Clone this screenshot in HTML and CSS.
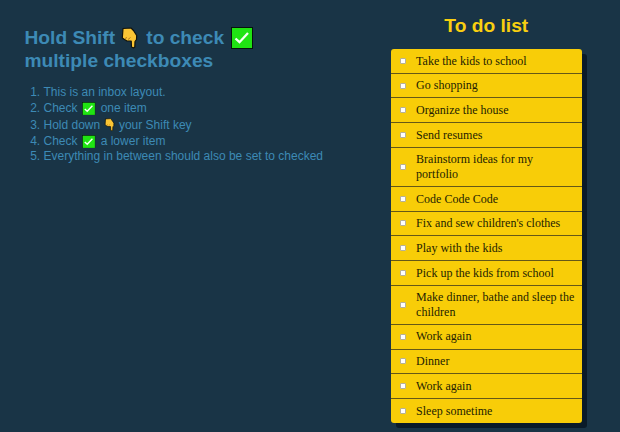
FILE: index.html
```html
<!DOCTYPE html>
<html lang="en">
<head>
<meta charset="utf-8">
<title>To do list</title>
<link rel="stylesheet" href="styles.css">
</head>
<body>
<svg class="symbols" aria-hidden="true">
  <symbol id="check" viewBox="0 0 22 22">
    <rect x=".5" y=".5" width="21" height="21" fill="#20e413" stroke="#07140c"/>
    <path d="M4.5 11.5L8.5 15.2L17 6" fill="none" stroke="#f4fff2" stroke-width="2.3"/>
  </symbol>
  <symbol id="hand" viewBox="0 0 17 22">
    <path d="M2 1.500L10 1L12.500 3.500L15.700 8.500L15.500 12.500L14 14.500L13.800 20L12.500 21L10.500 20L10.200 14L6 14L3.500 12.500L1.300 11Z" fill="#fbc534" stroke="#11130c" stroke-width="1.200" stroke-linejoin="round"/>
    <path d="M4 11.500L6 10.500M7 12.500L9.500 10.500" stroke="#b87c1c" fill="none"/>
  </symbol>
</svg>
<main class="layout">
  <section class="intro">
    <h1>Hold Shift <svg class="hand"><use href="#hand"/></svg> to check <svg class="check"><use href="#check"/></svg><br>multiple checkboxes</h1>
    <ol class="steps">
      <li class="text-row">This is an inbox layout.</li>
      <li>Check <svg class="check"><use href="#check"/></svg> one item</li>
      <li>Hold down <svg class="hand"><use href="#hand"/></svg> your Shift key</li>
      <li>Check <svg class="check"><use href="#check"/></svg> a lower item</li>
      <li class="text-row">Everything in between should also be set to checked</li>
    </ol>
  </section>
  <section class="todo">
    <h2>To do list</h2>
    <div class="inbox">
      <label class="item"><input type="checkbox"><span>Take the kids to school</span></label>
      <label class="item"><input type="checkbox"><span>Go shopping</span></label>
      <label class="item"><input type="checkbox"><span>Organize the house</span></label>
      <label class="item"><input type="checkbox"><span>Send resumes</span></label>
      <label class="item"><input type="checkbox"><span>Brainstorm ideas for my<br>portfolio</span></label>
      <label class="item"><input type="checkbox"><span>Code Code Code</span></label>
      <label class="item"><input type="checkbox"><span>Fix and sew children's clothes</span></label>
      <label class="item"><input type="checkbox"><span>Play with the kids</span></label>
      <label class="item"><input type="checkbox"><span>Pick up the kids from school</span></label>
      <label class="item"><input type="checkbox"><span>Make dinner, bathe and sleep the<br>children</span></label>
      <label class="item"><input type="checkbox"><span>Work again</span></label>
      <label class="item"><input type="checkbox"><span>Dinner</span></label>
      <label class="item"><input type="checkbox"><span>Work again</span></label>
      <label class="item"><input type="checkbox"><span>Sleep sometime</span></label>
    </div>
  </section>
</main>
</body>
</html>
```
FILE: styles.css
```css
* { box-sizing: border-box; }
body { margin: 0; background: #193446; overflow: hidden; }
.symbols { display: none; }
.layout { display: flex; height: 432px; }
.intro {
  width: 390.600px;
  padding: 27px 0 0 24.5px;
  color: #3d8ab5;
  font-family: "Liberation Sans", Arial, sans-serif;
  white-space: nowrap;
}
h1 { margin: 0; font-size: 19.2px; line-height: 22.5px; font-weight: bold; }
h1 .check { width: 22px; height: 22px; margin: 0 0 0 2px; vertical-align: -5px; }
h1 .hand { width: 17px; height: 22px; margin: 0 2.500px 0 1px; vertical-align: -5px; }
.steps { margin: 13px 0 0; padding: 0 0 0 19px; font-size: 12px; line-height: 16.5px; }
.steps li { height: 16.5px; }
.steps .text-row { height: 15px; line-height: 14px; }
.steps .text-row:last-child { line-height: 12px; }
.steps .check { width: 13.500px; height: 13.500px; margin: 0 1.500px; vertical-align: -3px; }
.steps .hand { width: 11px; height: 13.500px; margin: 0 1px 0 0; vertical-align: -3px; }
.todo { width: 191.400px; padding-top: 13px; }
h2 {
  margin: 0 0 11px;
  color: #f9cf10;
  font: bold 19.2px/25px "Liberation Sans", Arial, sans-serif;
  text-align: center;
}
.inbox {
  overflow: hidden;
  border-radius: 3px;
  background: #f8cd08;
  box-shadow: 5px 5px 0 #0a1b29;
  font: 12px/14.500px "Liberation Serif", "Times New Roman", serif;
  color: #241d02;
}
.item {
  display: flex;
  align-items: center;
  padding: 4.600px 0 4.600px 9px;
  border-bottom: 1px solid #655817;
}
.item:last-child { border-bottom: 0; }
.item input {
  appearance: none;
  width: 6px;
  height: 6px;
  margin: 0 10.500px 0 0;
  border: 1px solid #b5b09a;
  border-radius: 1px;
  background: #fff;
}
.item span { white-space: nowrap; }
```
